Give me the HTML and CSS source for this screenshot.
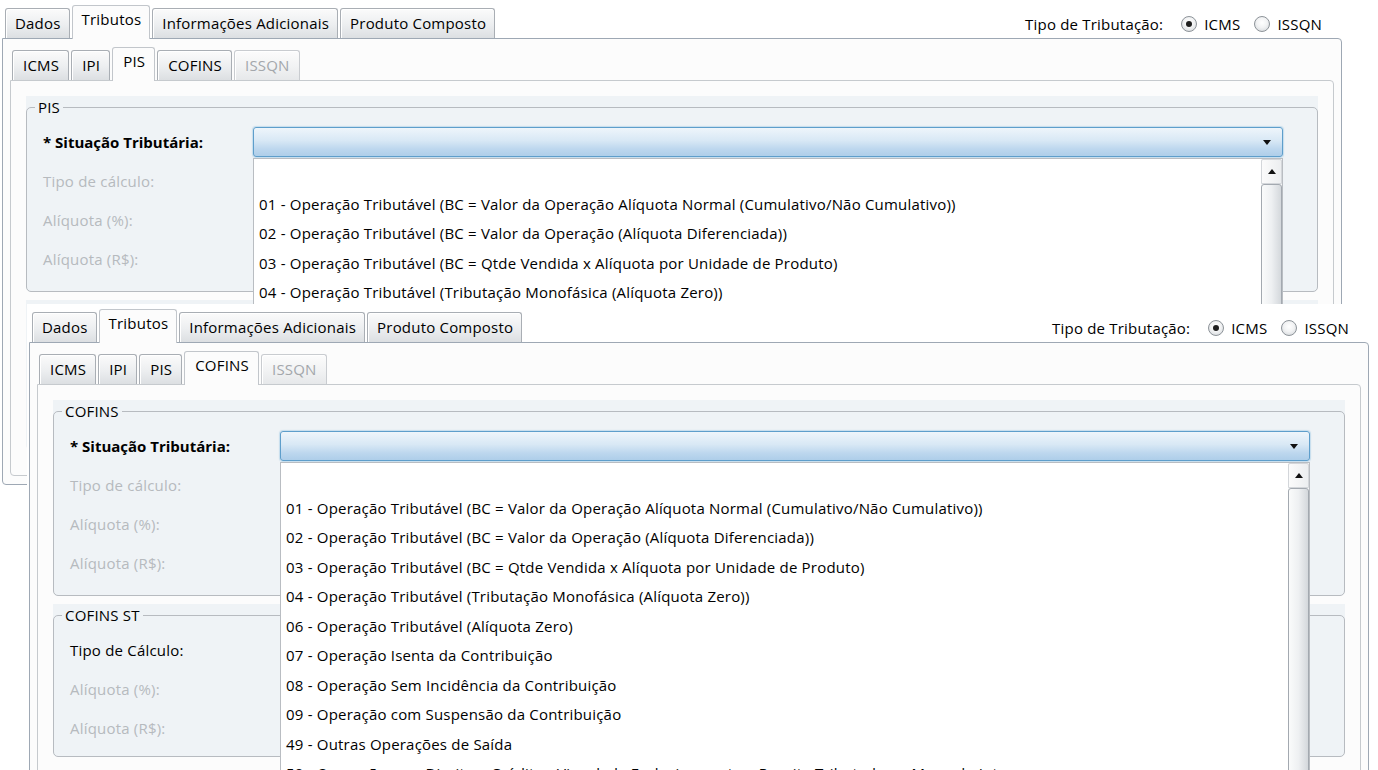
FILE: index.html
```html
<!DOCTYPE html>
<html lang="pt-BR">
<head>
<meta charset="utf-8">
<title>Tributos</title>
<link rel="stylesheet" href="styles.css">
</head>
<body>
<div class="desk">

  <section class="win win-a">
    <div class="win-head">
      <div class="tabs">
        <div class="tab">Dados</div>
        <div class="tab sel">Tributos</div>
        <div class="tab">Informações Adicionais</div>
        <div class="tab">Produto Composto</div>
      </div>
      <div class="trib">
        <span class="trib-label">Tipo de Tributação:</span>
        <span class="radio on"></span><span class="radio-text">ICMS</span>
        <span class="radio"></span><span class="radio-text">ISSQN</span>
      </div>
    </div>
    <div class="pane">
      <div class="subtabs">
        <div class="tab">ICMS</div>
        <div class="tab">IPI</div>
        <div class="tab sel">PIS</div>
        <div class="tab">COFINS</div>
        <div class="tab off">ISSQN</div>
      </div>
      <div class="subpane">
        <div class="group">
          <fieldset>
            <legend>PIS</legend>
            <div class="row">
              <label class="lbl req">* Situação Tributária:</label>
              <div class="combo-wrap">
                <div class="combo"><span class="arrow-down"></span></div>
                <div class="popup popup-short">
                  <ul class="list">
                    <li class="empty"></li>
                    <li>01 - Operação Tributável (BC = Valor da Operação Alíquota Normal (Cumulativo/Não Cumulativo))</li>
                    <li>02 - Operação Tributável (BC = Valor da Operação (Alíquota Diferenciada))</li>
                    <li>03 - Operação Tributável (BC = Qtde Vendida x Alíquota por Unidade de Produto)</li>
                    <li>04 - Operação Tributável (Tributação Monofásica (Alíquota Zero))</li>
                  </ul>
                  <div class="vscroll">
                    <div class="vs-up"><span class="arrow-up"></span></div>
                    <div class="vs-thumb"></div>
                  </div>
                </div>
              </div>
            </div>
            <div class="row"><label class="lbl dis">Tipo de cálculo:</label></div>
            <div class="row"><label class="lbl dis">Alíquota (%):</label></div>
            <div class="row"><label class="lbl dis">Alíquota (R$):</label></div>
          </fieldset>
        </div>
        <div class="group group-hidden"></div>
      </div>
    </div>
  </section>

  <section class="win win-b">
    <div class="win-head">
      <div class="tabs">
        <div class="tab">Dados</div>
        <div class="tab sel">Tributos</div>
        <div class="tab">Informações Adicionais</div>
        <div class="tab">Produto Composto</div>
      </div>
      <div class="trib">
        <span class="trib-label">Tipo de Tributação:</span>
        <span class="radio on"></span><span class="radio-text">ICMS</span>
        <span class="radio"></span><span class="radio-text">ISSQN</span>
      </div>
    </div>
    <div class="pane">
      <div class="subtabs">
        <div class="tab">ICMS</div>
        <div class="tab">IPI</div>
        <div class="tab">PIS</div>
        <div class="tab sel">COFINS</div>
        <div class="tab off">ISSQN</div>
      </div>
      <div class="subpane">
        <div class="group">
          <fieldset>
            <legend>COFINS</legend>
            <div class="row">
              <label class="lbl req">* Situação Tributária:</label>
              <div class="combo-wrap">
                <div class="combo"><span class="arrow-down"></span></div>
                <div class="popup">
                  <ul class="list">
                    <li class="empty"></li>
                    <li>01 - Operação Tributável (BC = Valor da Operação Alíquota Normal (Cumulativo/Não Cumulativo))</li>
                    <li>02 - Operação Tributável (BC = Valor da Operação (Alíquota Diferenciada))</li>
                    <li>03 - Operação Tributável (BC = Qtde Vendida x Alíquota por Unidade de Produto)</li>
                    <li>04 - Operação Tributável (Tributação Monofásica (Alíquota Zero))</li>
                    <li>06 - Operação Tributável (Alíquota Zero)</li>
                    <li>07 - Operação Isenta da Contribuição</li>
                    <li>08 - Operação Sem Incidência da Contribuição</li>
                    <li>09 - Operação com Suspensão da Contribuição</li>
                    <li>49 - Outras Operações de Saída</li>
                    <li>50 - Operação com Direito a Crédito - Vinculada Exclusivamente a Receita Tributada no Mercado Interno</li>
                  </ul>
                  <div class="vscroll">
                    <div class="vs-up"><span class="arrow-up"></span></div>
                    <div class="vs-thumb"></div>
                  </div>
                </div>
              </div>
            </div>
            <div class="row"><label class="lbl dis">Tipo de cálculo:</label></div>
            <div class="row"><label class="lbl dis">Alíquota (%):</label></div>
            <div class="row"><label class="lbl dis">Alíquota (R$):</label></div>
          </fieldset>
        </div>
        <div class="group">
          <fieldset class="st">
            <legend>COFINS ST</legend>
            <div class="row"><label class="lbl">Tipo de Cálculo:</label></div>
            <div class="row"><label class="lbl dis">Alíquota (%):</label></div>
            <div class="row"><label class="lbl dis">Alíquota (R$):</label></div>
          </fieldset>
        </div>
      </div>
    </div>
  </section>

</div>
</body>
</html>
```

FILE: styles.css
```css
* { box-sizing: border-box; }

html, body {
  margin: 0;
  padding: 0;
}

body {
  width: 1378px;
  height: 770px;
  overflow: hidden;
  background: #ffffff;
  font-family: "Open Sans", "Noto Sans", "DejaVu Sans", sans-serif;
  font-size: 15px;
  letter-spacing: 0.2px;
  color: #000000;
}

.desk {
  position: relative;
  width: 1378px;
  height: 770px;
}

/* ---------- windows ---------- */
.win {
  position: absolute;
  background: #ffffff;
  padding: 5px 2px 0 2px;
  height: 486px;
}

.win-a {
  left: 0;
  top: 0;
  width: 1344px;
  z-index: 1;
}

.win-b {
  left: 27px;
  top: 304px;
  width: 1351px;
  padding-right: 9px;
  z-index: 2;
}

/* ---------- header ---------- */
.win-head {
  display: flex;
  justify-content: space-between;
  align-items: flex-end;
  height: 33px;
  padding: 0 20px 0 3px;
}

.tabs,
.subtabs {
  display: flex;
  align-items: flex-end;
  gap: 2px;
}

.tab {
  position: relative;
  height: 30px;
  padding: 4px 8px 0 9px;
  line-height: 20px;
  white-space: nowrap;
  border: 1px solid #a9aeb4;
  border-bottom: none;
  border-radius: 3px 3px 0 0;
  background: linear-gradient(#fbfbfb 0%, #eceef0 55%, #dcdfe2 100%);
  box-shadow: inset 1px 1px 0 #ffffff;
}

.subtabs .tab {
  padding: 4px 9px 0 10px;
}

.tab.sel,
.subtabs .tab.sel {
  height: 34px;
  margin-bottom: -1px;
  padding-top: 3px;
  background: #fcfcfc;
  border-color: #c2c6cb;
  box-shadow: none;
  z-index: 2;
}

.tab.off {
  color: #a3a7ab;
  border-color: #c9ccd0;
  background: linear-gradient(#fcfcfc 0%, #f1f2f3 55%, #e6e8ea 100%);
}

.trib {
  align-self: stretch;
  display: flex;
  align-items: center;
  padding-top: 4px;
  white-space: nowrap;
}

.trib-label {
  margin-right: 18px;
}

.radio {
  width: 16px;
  height: 16px;
  border-radius: 50%;
  border: 1px solid #8d9399;
  background: radial-gradient(circle at 50% 40%, #ffffff 0%, #f2f3f4 45%, #cfd3d7 100%);
  display: flex;
  align-items: center;
  justify-content: center;
  margin-right: 7px;
}

.radio.on::after {
  content: "";
  width: 6px;
  height: 6px;
  border-radius: 50%;
  background: #1e1e1e;
}

.radio-text {
  margin-right: 14px;
}

.radio-text:last-child {
  margin-right: 0;
}

/* ---------- panes ---------- */
.pane {
  height: 447px;
  width: 1340px;
  border: 1px solid #9ea8b4;
  border-radius: 0 4px 4px 4px;
  background: #fcfcfc;
  padding: 7px 7px 8px 7px;
  display: flex;
  flex-direction: column;
}

.subtabs {
  height: 34px;
  padding-left: 2px;
}

.subpane {
  flex: 1;
  border: 1px solid #c6cace;
  border-radius: 0 4px 4px 4px;
  background: #fcfcfc;
  padding: 15px 15px 0 15px;
  display: flex;
  flex-direction: column;
  gap: 8px;
}

/* ---------- titled groups ---------- */
.group {
  background: #eff3f6;
  border-radius: 0 0 5px 5px;
}

.group-hidden {
  height: 150px;
}

fieldset {
  margin: 0;
  min-width: 0;
  border: 1px solid #b7bbc0;
  border-radius: 5px;
  padding: 9px 34px 17px 16px;
  display: flex;
  flex-direction: column;
  gap: 9px;
}

fieldset.st {
  padding-bottom: 13px;
}

legend {
  margin-left: -8px;
  padding: 0 3px;
  line-height: 22px;
  font-size: 15px;
}

.row {
  display: flex;
  align-items: center;
  height: 30px;
}

.lbl {
  width: 210px;
  flex: none;
  white-space: nowrap;
}

.lbl.req {
  font-weight: bold;
  letter-spacing: 0;
}

.lbl.dis {
  color: #b6babe;
}

/* ---------- combo ---------- */
.combo-wrap {
  flex: 1;
  position: relative;
  height: 30px;
}

.combo {
  height: 30px;
  border: 1px solid #5e9ecb;
  border-radius: 3px;
  background: linear-gradient(#eef5fb 0%, #d8e8f5 45%, #bdd7ee 75%, #aecee9 100%);
  box-shadow: 0 0 1px 1px rgba(120, 180, 220, 0.35);
  display: flex;
  align-items: center;
  justify-content: flex-end;
  padding-right: 11px;
}

.arrow-down {
  width: 0;
  height: 0;
  border-left: 4.5px solid transparent;
  border-right: 4.5px solid transparent;
  border-top: 5px solid #111111;
}

.popup {
  position: absolute;
  left: 0;
  right: 0;
  top: 31px;
  height: 420px;
  background: #ffffff;
  border: 1px solid #b9bdc2;
  display: flex;
  z-index: 5;
}

.popup-short {
  height: 160px;
}

.list {
  flex: 1;
  margin: 0;
  padding: 1px 0 0 5px;
  list-style: none;
  overflow: hidden;
}

.list li {
  height: 29.5px;
  line-height: 29.5px;
  white-space: nowrap;
}

.vscroll {
  width: 21px;
  flex: none;
  display: flex;
  flex-direction: column;
  background: #f4f5f6;
}

.vs-up {
  height: 25px;
  border: 1px solid #d3d6da;
  border-radius: 2px 2px 0 0;
  background: linear-gradient(90deg, #fbfbfb, #eceef0);
  display: flex;
  align-items: center;
  justify-content: center;
}

.arrow-up {
  width: 0;
  height: 0;
  border-left: 4.5px solid transparent;
  border-right: 4.5px solid transparent;
  border-bottom: 5px solid #111111;
}

.vs-thumb {
  flex: 1;
  border: 1px solid #a3a9b0;
  border-radius: 3px 3px 0 0;
  background: linear-gradient(90deg, #fafbfb 0%, #eef0f2 50%, #d4d8dc 100%);
}
```
